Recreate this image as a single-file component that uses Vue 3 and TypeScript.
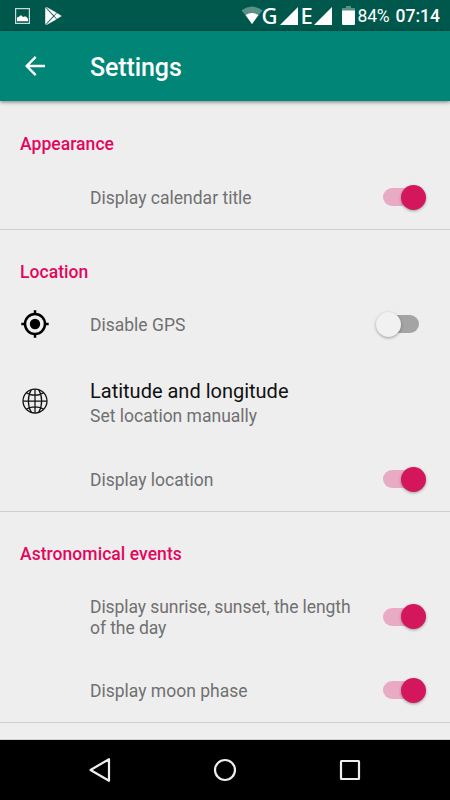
<script setup lang="ts">
import { reactive } from 'vue'

interface Item {
  title?: string
  summary: string
  icon?: 'gps' | 'globe'
  size: 'short' | 'regular' | 'two-line' | 'tall'
  on?: boolean
}

interface Section {
  heading: string
  items: Item[]
}

const sections = reactive<Section[]>([
  {
    heading: 'Appearance',
    items: [{ summary: 'Display calendar title', size: 'regular', on: true }],
  },
  {
    heading: 'Location',
    items: [
      { summary: 'Disable GPS', icon: 'gps', size: 'short', on: false },
      { title: 'Latitude and longitude', summary: 'Set location manually', icon: 'globe', size: 'two-line' },
      { summary: 'Display location', size: 'regular', on: true },
    ],
  },
  {
    heading: 'Astronomical events',
    items: [
      { summary: 'Display sunrise, sunset, the length of the day', size: 'tall', on: true },
      { summary: 'Display moon phase', size: 'regular', on: true },
    ],
  },
])

function toggle(item: Item) {
  if (item.on !== undefined) item.on = !item.on
}
</script>

<template>
  <div class="screen">
    <div class="status">
      <svg class="picture" width="15" height="16" viewBox="0 0 15 16">
        <rect x=".6" y=".6" width="13.8" height="14.8" fill="none" stroke="#c9dad7" stroke-width="1.2" />
        <path d="M2 13.3V9.5L4 8.8 5.2 7.5H6.5L8 9 9.5 8.6H11L13 10.8V13.3Z" fill="#fff" />
      </svg>
      <svg class="play" width="17" height="18" viewBox="0 0 17 18">
        <path d="M.3.5V17.5L8 9Z M1.2 0 8.8 8.2 11.4 5.7Z M1.2 18 8.8 9.8 11.4 12.3Z M12 6.2 9.5 9 12 11.8 16.5 9Z" fill="#fff" stroke="#fff" stroke-width=".3" />
      </svg>
      <div class="signals">
        <svg width="22" height="19" viewBox="0 0 22 19">
          <path d="M.5 4.2Q11-3.2 21.5 4.2L11 18Z" fill="#5a9187" />
          <path d="M4.6 9.1Q11 5 17.4 9.1L11 18Z" fill="#fff" />
        </svg>
        <span class="network g">G</span>
        <svg width="18" height="18" viewBox="0 0 18 18"><path d="M18 0V18H0Z" fill="#fff" /></svg>
        <span class="network e">E</span>
        <svg width="18" height="18" viewBox="0 0 18 18"><path d="M18 0V18H0Z" fill="#fff" /></svg>
        <svg class="battery" width="13" height="19" viewBox="0 0 13 19">
          <path d="M4 0H9V2H13V5H0V2H4Z" fill="#5a9187" />
          <path d="M0 4.5H13V18A1 1 0 0 1 12 19H1A1 1 0 0 1 0 18Z" fill="#fff" />
        </svg>
        <span class="percent">84%</span>
        <span class="time">07:14</span>
      </div>
    </div>

    <header class="toolbar">
      <svg class="back" width="20" height="20" viewBox="0 0 20 20">
        <path d="M20 10H2M10.7.9 1.7 10 10.7 19.1" fill="none" stroke="#fff" stroke-width="2.4" />
      </svg>
      <h1>Settings</h1>
    </header>

    <main class="content">
      <section v-for="section in sections" :key="section.heading" class="section">
        <h2>{{ section.heading }}</h2>
        <div v-for="item in section.items" :key="item.summary" class="row" :class="item.size" @click="toggle(item)">
          <div class="icon">
            <svg v-if="item.icon === 'gps'" width="28" height="28" viewBox="0 0 28 28">
              <g fill="none" stroke="#000" stroke-width="2.5">
                <circle cx="14" cy="14" r="10" />
                <path d="M14 .3V4M14 24V27.7M.3 14H4M24 14H27.7" />
              </g>
              <circle cx="14" cy="14" r="5.2" />
            </svg>
            <svg v-if="item.icon === 'globe'" width="28" height="28" viewBox="0 0 28 28">
              <g fill="none" stroke="#111" stroke-width="1.25">
                <circle cx="14" cy="14" r="12" />
                <path d="M14 2V26M2 14H26M10.3 2.6C6.4 9 6.4 19 10.3 25.4M17.7 2.6C21.6 9 21.6 19 17.7 25.4M5.5 5.8C9.5 9 18.5 9 22.5 5.8M5.5 22.2C9.5 19 18.5 19 22.5 22.2" />
              </g>
            </svg>
          </div>
          <div class="label">
            <div v-if="item.title" class="title">{{ item.title }}</div>
            <div class="summary">{{ item.summary }}</div>
          </div>
          <div v-if="item.on !== undefined" class="switch" :class="{ on: item.on }">
            <div class="track"><div class="thumb"></div></div>
          </div>
        </div>
      </section>
    </main>

    <nav class="navigation">
      <svg width="22" height="24" viewBox="0 0 22 24"><path d="M20 1.2V22.8L1.5 12Z" /></svg>
      <svg width="24" height="24" viewBox="0 0 24 24"><circle cx="12" cy="12" r="10" /></svg>
      <svg width="22" height="22" viewBox="0 0 22 22"><rect x="2" y="2" width="18" height="18" rx=".4" /></svg>
    </nav>
  </div>
</template>

<style>
body {
  margin: 0;
}
</style>

<style scoped>
.screen {
  display: flex;
  flex-direction: column;
  width: 450px;
  height: 800px;
  overflow: hidden;
  background: #eee;
  font-family: Roboto, "Liberation Sans", sans-serif;
}

svg {
  display: block;
  flex: none;
}

.status {
  display: flex;
  align-items: center;
  box-sizing: border-box;
  flex: none;
  height: 31px;
  padding: 0 10px 0 15px;
  background: #00584c;
  color: #fff;
}

.play {
  margin-left: 15px;
}

.signals {
  display: flex;
  align-items: center;
  margin-left: auto;
}

.network {
  padding-bottom: 2px;
  font: 500 22px/24px "Noto Sans", sans-serif;
}

.g {
  width: 18px;
  margin-left: -1px;
}

.e {
  width: 13px;
  margin-left: 3px;
}

.battery {
  margin-left: 10px;
}

.percent {
  width: 38px;
  margin-left: 3px;
  font-size: 17.5px;
  letter-spacing: -0.2px;
}

.time {
  font-size: 17.5px;
  font-weight: 500;
}

.toolbar {
  display: flex;
  align-items: center;
  position: relative;
  flex: none;
  height: 70px;
  background: #018577;
  box-shadow: 0 1px 4px rgba(0, 0, 0, 0.5);
}

.back {
  margin-left: 25px;
}

h1 {
  margin: 4px 0 0 45px;
  color: #fff;
  font-size: 25px;
  font-weight: 500;
  line-height: 30px;
  letter-spacing: -0.1px;
}

.content {
  flex: 1;
  min-height: 0;
  padding-top: 1px;
  overflow: hidden;
}

.section {
  border-bottom: 1px solid #cecece;
}

h2 {
  box-sizing: border-box;
  height: 63px;
  margin: 0;
  padding: 32px 0 0 20px;
  color: #e2065e;
  font-size: 17.5px;
  font-weight: 500;
  line-height: 21px;
  letter-spacing: 0.05px;
}

.row {
  display: flex;
  align-items: center;
  box-sizing: border-box;
  padding: 0 24.5px 0 21px;
}

.short {
  height: 62px;
}

.regular {
  height: 64px;
}

.tall {
  height: 83px;
}

.two-line {
  height: 92px;
}

.icon {
  width: 69px;
}

.label {
  width: 270px;
  padding-top: 3px;
  white-space: nowrap;
}

.tall .label {
  padding-top: 2px;
  white-space: normal;
}

.tall .summary {
  letter-spacing: -0.07px;
}

.title {
  padding-bottom: 2px;
  color: #111;
  font-size: 20px;
  line-height: 25px;
}

.summary {
  color: #707070;
  font-size: 17.5px;
  line-height: 21px;
}

.switch {
  display: flex;
  margin-left: auto;
  padding-right: 7px;
}

.track {
  display: flex;
  align-items: center;
  width: 36px;
  height: 18px;
  border-radius: 9px;
  background: #a4a4a4;
}

.thumb {
  flex: none;
  width: 25px;
  height: 25px;
  margin-left: -7px;
  border-radius: 50%;
  background: #f1f1f1;
  box-shadow: 0 1px 3px rgba(0, 0, 0, 0.35);
}

.on .track {
  background: #e8abc3;
}

.on .thumb {
  margin-left: 18px;
  background: #d4175d;
}

.navigation {
  display: flex;
  align-items: center;
  justify-content: space-between;
  box-sizing: border-box;
  flex: none;
  height: 61px;
  padding: 0 89px;
  border-top: 1px solid #d2d2d2;
  background: #000;
}

.navigation svg {
  fill: none;
  stroke: #eee;
  stroke-width: 2.2;
  stroke-linejoin: round;
}
</style>
